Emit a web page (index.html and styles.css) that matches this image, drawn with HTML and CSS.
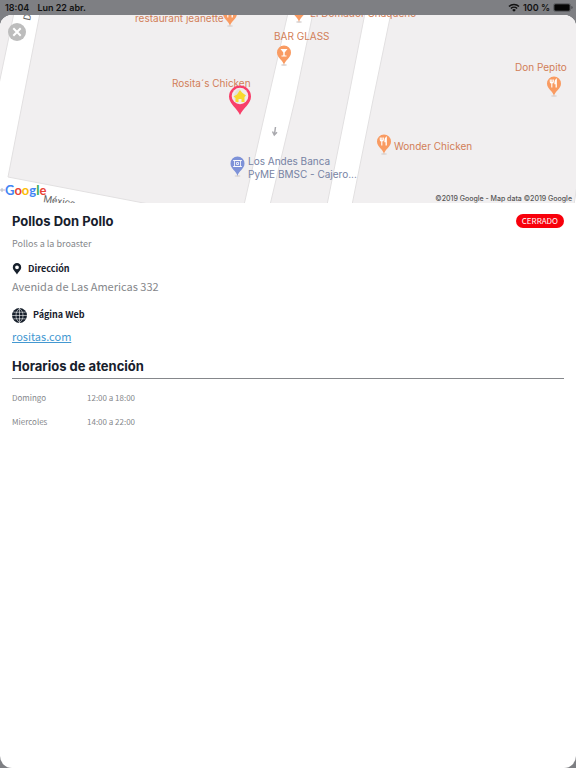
FILE: index.html
```html
<!DOCTYPE html>
<html lang="es">
<head>
<meta charset="utf-8">
<meta name="viewport" content="width=device-width, initial-scale=1">
<title>Pollos Don Pollo</title>
<link rel="stylesheet" href="styles.css">
</head>
<body>
<header class="status">
  <span>18:04</span>
  <span class="status-date">Lun 22 abr.</span>
  <svg class="wifi" viewBox="0 0 12 9" aria-hidden="true">
    <path d="M1 3.6a7 7 0 0 1 10 0M2.9 5.5a4.4 4.4 0 0 1 6.2 0" fill="none" stroke="#111" stroke-width="1.5"/>
    <path d="M4.2 6.9a2.6 2.6 0 0 1 3.6 0L6 8.8z" fill="#111"/>
  </svg>
  <span>100 %</span>
  <svg class="battery" viewBox="0 0 20 9" aria-hidden="true">
    <rect x=".5" y=".5" width="17" height="8" rx="2" fill="none" stroke="#55565a" stroke-width=".7"/>
    <rect x="1.3" y="1.3" width="15.4" height="6.4" rx="1.2" fill="#050505"/>
    <path d="M18.4 3v3q1.2-.4 1.2-1.5T18.4 3z" fill="#45464a"/>
  </svg>
</header>
<main class="sheet">
  <section class="map" aria-label="Mapa">
    <svg class="map-canvas" viewBox="0 15 576 188" preserveAspectRatio="xMidYMid slice">
      <defs>
        <g id="pin">
          <ellipse cx="0" cy="0" rx="3" ry="1" fill="#ddd8d8"/>
          <path d="M0 0C-1-5-7-7-7-12.500A7 7 0 0 1 7-12.500C7-7 1-5 0 0z"/>
        </g>
        <g id="food" fill="none" stroke="#fff">
          <path d="M-3.700-16.500v2.500q0 1 1.500 1t1.500-1v-2.500M-2.200-16.500v8" stroke-width="1.100"/>
          <path d="M2.200-8.500v-8q-1.300 1-1.200 4h1.200" stroke-width="1.300"/>
        </g>
      </defs>
      <rect x="0" y="15" width="576" height="188" fill="#fff"/>
      <g fill="#f1eff0" stroke="#e2e0e1" stroke-width="1">
        <path d="M-2 13H14L-2 89z"/>
        <path d="M40 13H288L268 100 244 205H154L8 177 22 105z"/>
        <path d="M313 13H365L348 100 327 205H270L295 100z"/>
        <path d="M391 13H580V165L574 205H352L373 100z"/>
      </g>
      <text class="street" transform="translate(30 21) rotate(-78)">D</text>
      <text class="street" transform="translate(43 202) rotate(9)">México</text>
      <path d="M0 190h5m-3-2v4" stroke="#b5b9c4"/>
      <path d="M275.500 127l-1 7m-2-2.500l1.800 3.500 2.700-2.700" fill="none" stroke="#a9a9ae" stroke-width="1.500"/>
      <g class="place">
        <text x="135" y="22">restaurant jeanette</text>
        <text x="310" y="17">El Domador Chaqueño</text>
        <text x="274" y="40">BAR GLASS</text>
        <text x="172" y="87">Rosita´s Chicken</text>
        <text x="515" y="71">Don Pepito</text>
        <text x="394" y="150">Wonder Chicken</text>
      </g>
      <g class="bank">
        <text x="248" y="165">Los Andes Banca</text>
        <text x="248" y="178">PyME BMSC - Cajero...</text>
      </g>
      <g fill="#f99b62">
        <g transform="translate(230 26)"><use href="#pin"/><use href="#food"/></g>
        <g transform="translate(299 22)"><use href="#pin"/></g>
        <g transform="translate(554 96)"><use href="#pin"/><use href="#food"/></g>
        <g transform="translate(384 154)"><use href="#pin"/><use href="#food"/></g>
        <g transform="translate(284 65)"><use href="#pin"/><path d="M-3.500-16h7L.7-12.500v3H2.500v1h-5v-1h1.800v-3z" fill="#fff"/></g>
      </g>
      <g transform="translate(237.500 176)" fill="#7e92d8"><use href="#pin"/><path d="M-3-15.500h6v6h-6zM-4.500-15.500h9M-4.500-9.500h9M-1-13.500h2v2h-2z" fill="none" stroke="#fff" stroke-width=".8"/></g>
      <path d="M240 115C237 108 229 104 229 96.500a11 11 0 0 1 22 0C251 104 243 108 240 115z" fill="#f83f69"/>
      <circle cx="240" cy="96" r="8.300" fill="#f0eceb"/>
      <path d="M240 88.500a8.300 8.300 0 0 0-2 15z" fill="#e3e1df"/>
      <path d="M240 90l2 2.500 4 3-1.500 1.500v5h-3v-3h-3v3h-3v-4l-2-1.500 3.500-2z" fill="#f8d92e"/>
    </svg>
    <div class="google" aria-label="Google"><span class="b">G</span><span class="r">o</span><span class="y">o</span><span class="b">g</span><span class="g">l</span><span class="r">e</span></div>
    <small class="credit">©2019 Google - Map data ©2019 Google</small>
    <button class="close" type="button" aria-label="Cerrar">
      <svg viewBox="0 0 18 18"><path d="M5.300 5.300l7.400 7.400m0-7.400l-7.400 7.400" stroke="#fff" stroke-width="2"/></svg>
    </button>
  </section>
  <section class="details">
    <div class="heading">
      <h1>Pollos Don Pollo</h1>
      <span class="badge">CERRADO</span>
    </div>
    <p class="summary">Pollos a la broaster</p>
    <h2 class="label">
      <svg class="marker" viewBox="0 0 10 12" aria-hidden="true"><path fill="#17202c" fill-rule="evenodd" d="M5 0a4.200 4.200 0 0 0-4.200 4.200C.8 7 3.500 8.500 5 11.500 6.500 8.500 9.200 7 9.200 4.200A4.200 4.200 0 0 0 5 0zm0 2.400a1.900 1.900 0 1 1 0 3.800 1.900 1.900 0 0 1 0-3.800z"/></svg>
      Dirección
    </h2>
    <p class="address">Avenida de Las Americas 332</p>
    <h2 class="label web">
      <svg class="globe" viewBox="0 0 16 16" aria-hidden="true"><circle cx="8" cy="8" r="8" fill="#17202c"/><path d="M8 0v16M0 8h16M1.500 4.500h13M1.500 11.500h13M8 .5C3 4 3 12 8 15.500M8 .5c5 3.500 5 11.500 0 15" fill="none" stroke="#fff" stroke-width=".6"/></svg>
      Página Web
    </h2>
    <a class="site" href="#">rositas.com</a>
    <h2 class="hours-title">Horarios de atención</h2>
    <table class="hours">
      <tbody>
        <tr><th scope="row">Domingo</th><td>12:00 a 18:00</td></tr>
        <tr><th scope="row">Miercoles</th><td>14:00 a 22:00</td></tr>
      </tbody>
    </table>
  </section>
</main>
</body>
</html>
```
FILE: styles.css
```css
* { box-sizing: border-box; }

body {
  margin: 0;
  min-height: 100vh;
  display: flex;
  flex-direction: column;
  background: #7e7f83;
  font-family: "Noto Sans CJK JP", "Noto Sans", sans-serif;
  color: #17202c;
}

h1, h2, p { margin: 0; }

.status {
  height: 15px;
  flex: none;
  display: flex;
  align-items: center;
  padding: 0 3px 0 5px;
  font: 600 9px/15px Inter, sans-serif;
  color: #111;
}
.status-date { margin: 0 auto 0 8px; }
.wifi { width: 12px; height: 9px; margin-right: 3px; }
.battery { width: 20px; height: 9px; margin-left: 3px; }

.sheet {
  flex: 1;
  background: #fff;
  border-radius: 12px;
  overflow: hidden;
}

.map { position: relative; height: 188px; overflow: hidden; }
.map-canvas { display: block; width: 100%; height: 100%; }
.place, .bank { font: 10px Inter, sans-serif; }
.place { fill: #d27e57; }
.bank { fill: #7682a3; }
.street { font: 10px Roboto, sans-serif; fill: #666; }

.google {
  position: absolute;
  left: 5px;
  bottom: 4px;
  font: 700 13px/18px Lato, sans-serif;
}
.b { color: #4285f4; }
.r { color: #ea4335; }
.y { color: #fbbc05; }
.g { color: #34a853; }

.credit {
  position: absolute;
  right: 4px;
  bottom: 0;
  font: 500 7px/9px Inter, sans-serif;
  color: #555;
}

.close {
  position: absolute;
  left: 8px;
  top: 8px;
  width: 18px;
  height: 18px;
  padding: 0;
  border: 0;
  border-radius: 50%;
  background: #bdbdbd;
}
.close svg { display: block; }

.details { padding: 8px 12px; }

.heading {
  display: flex;
  align-items: center;
  justify-content: space-between;
}
h1, .hours-title { font: 700 13px/20px Inter, sans-serif; }

.badge {
  padding: 0 6px;
  border-radius: 8px;
  background: #f8000b;
  color: #fff;
  font-size: 8px;
  line-height: 14px;
}

.summary {
  margin-top: 5px;
  font-size: 9px;
  line-height: 16px;
  color: #85878b;
}

.label {
  display: flex;
  align-items: center;
  gap: 6px;
  margin-top: 9px;
  font-size: 9px;
  line-height: 16px;
  font-weight: 700;
}
.marker { width: 10px; height: 12px; }
.globe { width: 15px; height: 15px; }
.web { margin-top: 12px; }

.address {
  font-size: 11px;
  line-height: 18px;
  color: #85878b;
}

.site {
  display: block;
  width: fit-content;
  margin-top: 4px;
  font-size: 11px;
  line-height: 18px;
  color: #4398d1;
}

.hours-title {
  margin-top: 11px;
  padding-bottom: 2px;
  border-bottom: 1px solid #85878b;
}

.hours {
  margin-top: 7px;
  border-collapse: collapse;
  font-size: 8px;
  line-height: 24px;
  color: #85878b;
}
.hours th, .hours td { padding: 0; text-align: left; font-weight: 400; }
.hours th { width: 75px; }
```
